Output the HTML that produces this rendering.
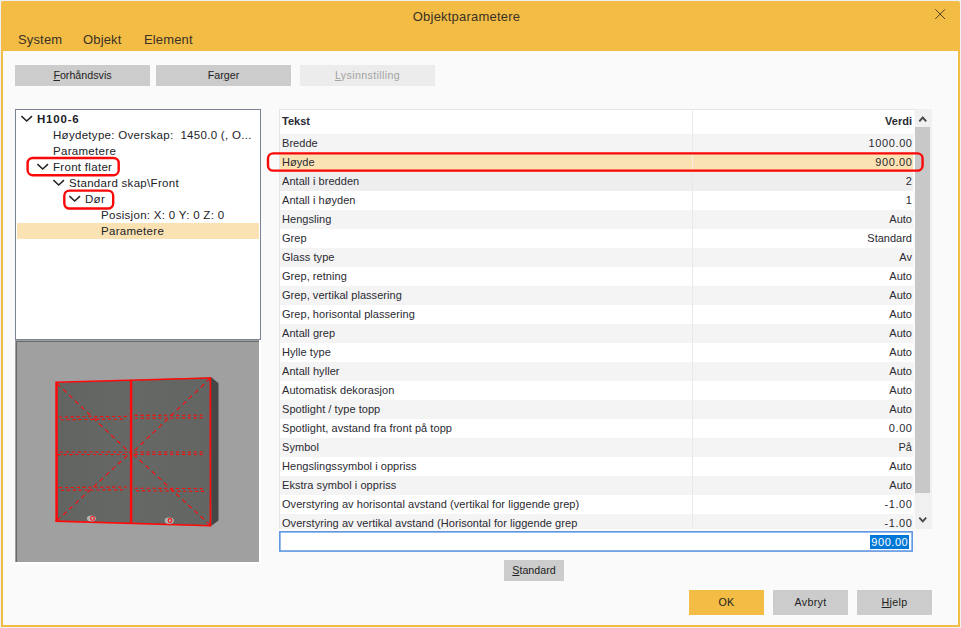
<!DOCTYPE html>
<html>
<head>
<meta charset="utf-8">
<title>Objektparametere</title>
<style>
html,body{margin:0;padding:0;}
body{width:961px;height:628px;overflow:hidden;background:#eef0f7;font-family:"Liberation Sans",sans-serif;font-size:11px;color:#2a2a32;position:relative;}
.abs{position:absolute;}
#win{position:absolute;left:1px;top:1px;width:959px;height:626px;background:#f3bc45;border-radius:2px 2px 0 0;}
#content{position:absolute;left:3px;top:51px;width:955px;height:574px;background:#fafafa;}
#title{position:absolute;left:0;top:9px;width:933px;text-align:center;font-size:13px;letter-spacing:0.21px;color:#3a3226;}
.menu{position:absolute;top:32px;font-size:13px;letter-spacing:0.15px;color:#3a3226;}
.btn{position:absolute;background:#cccccc;text-align:center;font-size:10.7px;color:#222;}
.btn u{text-decoration:underline;}
.t{position:absolute;white-space:nowrap;font-size:11.5px;letter-spacing:0.3px;line-height:16px;height:16px;color:#222228;}
.row{position:absolute;left:1px;width:633px;height:19px;}
.row .l{position:absolute;left:2px;top:0;line-height:19px;white-space:nowrap;letter-spacing:0.05px;}
.row .r{position:absolute;right:1px;top:0;line-height:19px;white-space:nowrap;text-align:right;}
.n{letter-spacing:0.62px;margin-right:-0.62px;}
.g{background:#f4f4f4;}
.g2{background:#eeeeee;}
.h{background:#fae2b3;}
.hd .l{position:absolute;left:2px;top:0;line-height:22px;font-weight:bold;}
.hd .r{position:absolute;right:1px;top:0;line-height:22px;font-weight:bold;}
.w{background:#ffffff;}
</style>
</head>
<body>
<div id="win"></div>
<div id="content"></div>

<!-- title bar -->
<div id="title">Objektparametere</div>
<svg class="abs" style="left:933px;top:7px" width="14" height="14" viewBox="0 0 14 14"><path d="M2.3 2.3 L12 12 M12 2.3 L2.3 12" stroke="#43381f" stroke-width="0.95" fill="none"/></svg>
<div class="menu" style="left:18px">System</div>
<div class="menu" style="left:83px">Objekt</div>
<div class="menu" style="left:144px">Element</div>

<!-- toolbar buttons -->
<div class="btn" style="left:15px;top:65px;width:135px;height:21px;line-height:20px"><u>F</u>orhåndsvis</div>
<div class="btn" style="left:156px;top:65px;width:135px;height:21px;line-height:20px">Far<u>g</u>er</div>
<div class="btn" style="left:300px;top:65px;width:135px;height:21px;line-height:20px;background:#ececec;color:#a3a3a3;letter-spacing:0.36px"><u>L</u>ysinnstilling</div>

<!-- tree -->
<div class="abs" style="left:15px;top:109px;width:244px;height:229px;background:#fff;border:1px solid #7b8494;"></div>
<div class="abs" style="left:17px;top:223px;width:242px;height:16px;background:#fae2b3;"></div>
<div class="t" style="left:37px;top:111px;font-weight:bold;letter-spacing:0.8px">H100-6</div>
<div class="t" style="left:53px;top:127px">Høydetype: Overskap:&nbsp; 1450.0 (, O...</div>
<div class="t" style="left:53px;top:143px">Parametere</div>
<div class="t" style="left:53px;top:159px">Front flater</div>
<div class="t" style="left:69px;top:175px">Standard skap\Front</div>
<div class="t" style="left:85px;top:191px">Dør</div>
<div class="t" style="left:101px;top:207px">Posisjon: X: 0 Y: 0 Z: 0</div>
<div class="t" style="left:101px;top:223px">Parametere</div>

<svg class="abs" style="left:21px;top:114px" width="12" height="10" viewBox="0 0 12 10"><path d="M0.4 2.1 L5.7 7.1 L11 2.1" stroke="#222" stroke-width="1.45" fill="none"/></svg>
<svg class="abs" style="left:37px;top:162px" width="12" height="10" viewBox="0 0 12 10"><path d="M0.4 2.1 L5.7 7.1 L11 2.1" stroke="#222" stroke-width="1.45" fill="none"/></svg>
<svg class="abs" style="left:53px;top:178px" width="12" height="10" viewBox="0 0 12 10"><path d="M0.4 2.1 L5.7 7.1 L11 2.1" stroke="#222" stroke-width="1.45" fill="none"/></svg>
<svg class="abs" style="left:69px;top:194px" width="12" height="10" viewBox="0 0 12 10"><path d="M0.4 2.1 L5.7 7.1 L11 2.1" stroke="#222" stroke-width="1.45" fill="none"/></svg>

<!-- preview -->
<div class="abs" style="left:15px;top:340px;width:246px;height:224px;background:#fff;"></div>
<div class="abs" id="prev" style="left:15px;top:340px;width:244px;height:222px;background:#a0a0a0;"></div>
<div class="abs" style="left:16px;top:341px;width:243px;height:1px;background:#696969;"></div>
<div class="abs" style="left:16px;top:341px;width:1px;height:221px;background:#696969;"></div>
<svg class="abs" style="left:15px;top:340px" width="245" height="222" viewBox="15 340 245 222">
<defs>
<linearGradient id="fg" x1="0" y1="0" x2="1" y2="0"><stop offset="0" stop-color="#626461"/><stop offset="0.5" stop-color="#666865"/><stop offset="1" stop-color="#636562"/></linearGradient>
</defs>
<!-- side face -->
<polygon points="211,377 218.5,383.3 218.5,520.6 211.2,526" fill="#464744"/>
<!-- front face -->
<polygon points="56,382.6 211,377.3 211.2,526 56.2,521.2" fill="url(#fg)"/>
<g fill="none" stroke="#ff0a0a">
<!-- outline -->
<line x1="55.3" y1="382.35" x2="211.1" y2="377.95" stroke-width="1.55"/>
<line x1="210.35" y1="377.2" x2="210.45" y2="526.2" stroke-width="1.6"/>
<line x1="55.3" y1="521.1" x2="211.1" y2="525.75" stroke-width="1.7"/>
<line x1="131.1" y1="380" x2="131.1" y2="523.7" stroke-width="2.4"/>
<line x1="56.5" y1="382.6" x2="56.6" y2="521.2" stroke-width="2.5"/>
<!-- diagonals -->
<g stroke-width="1.1" stroke-dasharray="4.6 3.7">
<line x1="57" y1="383.5" x2="130" y2="453"/>
<line x1="57" y1="520.5" x2="130" y2="453"/>
<line x1="210" y1="378.5" x2="132" y2="453"/>
<line x1="210" y1="525" x2="132" y2="453"/>
</g>
<!-- shelves -->
<g stroke-width="1.1" stroke-dasharray="3.1 2.8">
<line x1="58.8" y1="417" x2="127.1" y2="416.4"/><line x1="60.7" y1="419.8" x2="124.4" y2="419.1"/>
<line x1="134.7" y1="415.4" x2="205" y2="415.2"/><line x1="134.7" y1="418.2" x2="205" y2="417.8"/>
<line x1="60" y1="452" x2="127.2" y2="452"/><line x1="57.6" y1="454.6" x2="125.8" y2="454.5"/>
<line x1="134.7" y1="452" x2="205.5" y2="452"/><line x1="134.7" y1="454.4" x2="205.5" y2="454.4"/>
<line x1="59" y1="487.6" x2="127" y2="487"/><line x1="61" y1="490.2" x2="125" y2="489.8"/>
<line x1="134.7" y1="488.2" x2="205" y2="488.6"/><line x1="136" y1="490.8" x2="205" y2="491.4"/>
</g>
</g>
<!-- knobs -->
<ellipse cx="91.4" cy="518.6" rx="4.5" ry="3" fill="#b4b4b4"/>
<circle cx="92.5" cy="518.4" r="1.9" fill="none" stroke="#ff0a0a" stroke-width="1.1"/>
<ellipse cx="169.3" cy="520.7" rx="4.6" ry="3.1" fill="#b4b4b4"/>
<circle cx="170" cy="520.5" r="1.9" fill="none" stroke="#ff0a0a" stroke-width="1.1"/>
</svg>

<!-- table -->
<div class="abs" id="tbl" style="left:279px;top:109px;width:653px;height:420px;background:#f0f0f0;overflow:hidden">
<div class="abs" style="left:0;top:0;width:636px;height:420px;background:#fafafa;border-top:1px solid #e6e6e6;border-left:1px solid #e6e6e6;box-sizing:border-box"></div>
<div class="abs hd" style="left:1px;top:1px;width:633px;height:24px;background:#fff"><span class="l">Tekst</span><span class="r">Verdi</span></div>
<div class="row g" style="top:25px"><span class="l">Bredde</span><span class="r n">1000.00</span></div>
<div class="row h" style="top:44px"><span class="l">Høyde</span><span class="r n">900.00</span></div>
<div class="row g2" style="top:63px"><span class="l">Antall i bredden</span><span class="r n">2</span></div>
<div class="row w" style="top:82px"><span class="l">Antall i høyden</span><span class="r n">1</span></div>
<div class="row g" style="top:101px"><span class="l">Hengsling</span><span class="r">Auto</span></div>
<div class="row w" style="top:120px"><span class="l">Grep</span><span class="r">Standard</span></div>
<div class="row g" style="top:139px"><span class="l">Glass type</span><span class="r">Av</span></div>
<div class="row w" style="top:158px"><span class="l">Grep, retning</span><span class="r">Auto</span></div>
<div class="row g" style="top:177px"><span class="l">Grep, vertikal plassering</span><span class="r">Auto</span></div>
<div class="row w" style="top:196px"><span class="l">Grep, horisontal plassering</span><span class="r">Auto</span></div>
<div class="row g" style="top:215px"><span class="l">Antall grep</span><span class="r">Auto</span></div>
<div class="row w" style="top:234px"><span class="l">Hylle type</span><span class="r">Auto</span></div>
<div class="row g" style="top:253px"><span class="l">Antall hyller</span><span class="r">Auto</span></div>
<div class="row w" style="top:272px"><span class="l">Automatisk dekorasjon</span><span class="r">Auto</span></div>
<div class="row g" style="top:291px"><span class="l">Spotlight / type topp</span><span class="r">Auto</span></div>
<div class="row w" style="top:310px"><span class="l">Spotlight, avstand fra front på topp</span><span class="r n">0.00</span></div>
<div class="row g" style="top:329px"><span class="l">Symbol</span><span class="r">På</span></div>
<div class="row w" style="top:348px"><span class="l">Hengslingssymbol i oppriss</span><span class="r">Auto</span></div>
<div class="row g" style="top:367px"><span class="l">Ekstra symbol i oppriss</span><span class="r">Auto</span></div>
<div class="row w" style="top:386px"><span class="l">Overstyring av horisontal avstand (vertikal for liggende grep)</span><span class="r n">-1.00</span></div>
<div class="row g" style="top:405px"><span class="l">Overstyring av vertikal avstand (Horisontal for liggende grep</span><span class="r n">-1.00</span></div>
<div class="abs" style="left:413px;top:1px;width:1px;height:419px;background:#e9e9e9"></div>
<div class="abs" style="left:413px;top:44px;width:1px;height:19px;background:#f5efe2"></div>
<!-- scrollbar -->
<div class="abs" style="left:636px;top:18px;width:15px;height:366px;background:#c8c8c8"></div>
<svg class="abs" style="left:638px;top:5px" width="12" height="10" viewBox="0 0 12 10"><path d="M2.3 7.3 L5.75 3.5 L9.2 7.3" stroke="#484848" stroke-width="1.9" fill="none"/></svg>
<svg class="abs" style="left:638px;top:406px" width="12" height="10" viewBox="0 0 12 10"><path d="M2.3 2.6 L5.75 6.4 L9.2 2.6" stroke="#484848" stroke-width="1.9" fill="none"/></svg>
</div>

<!-- input -->
<svg class="abs" style="left:278px;top:530px" width="637" height="23" viewBox="278 530 637 23"><rect x="279.85" y="531.85" width="632.3" height="19.2" fill="#fff" stroke="#5691e1" stroke-width="1.55"/></svg>
<div class="abs" style="left:870px;top:535px;width:39px;height:14px;background:#0078d7;color:#fff;font-size:11px;line-height:14px;text-align:center;white-space:nowrap;letter-spacing:0.55px;text-indent:0.55px">900.00</div>

<!-- bottom buttons -->
<div class="btn" style="left:504px;top:560px;width:60px;height:21px;line-height:21px"><u>S</u>tandard</div>
<div class="btn" style="left:689px;top:590px;width:75px;height:25px;line-height:25px;background:#f3bc45;letter-spacing:0.3px">OK</div>
<div class="btn" style="left:773px;top:590px;width:75px;height:25px;line-height:25px;letter-spacing:0.3px">Avbryt</div>
<div class="btn" style="left:857px;top:590px;width:75px;height:25px;line-height:25px;letter-spacing:0.3px"><u>H</u>jelp</div>
<!-- red annotations -->
<svg class="abs" style="left:0;top:0;pointer-events:none" width="961" height="628" viewBox="0 0 961 628">
<rect x="27.6" y="157.95" width="91.1" height="17.3" rx="5.2" ry="5.2" fill="none" stroke="#fa0808" stroke-width="2.4"/>
<rect x="64.3" y="190.6" width="48.9" height="17.95" rx="5.2" ry="5.2" fill="none" stroke="#fa0808" stroke-width="2.4"/>
<rect x="268" y="153.35" width="654.6" height="17.3" rx="5.2" ry="5.2" fill="none" stroke="#fa0808" stroke-width="2.4"/>
</svg>
</body>
</html>
